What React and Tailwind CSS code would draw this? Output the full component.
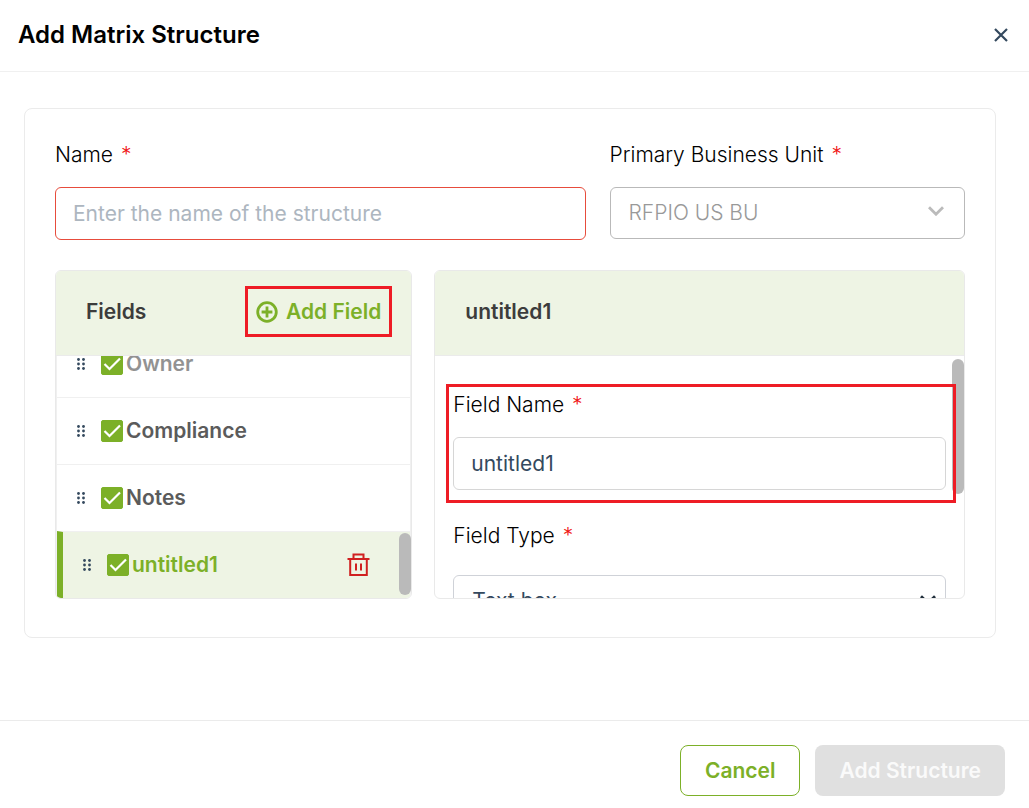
import { useState } from "react";

const FIELDS = [
    { id: "owner", name: "Owner", locked: true },
    { id: "compliance", name: "Compliance" },
    { id: "notes", name: "Notes" },
    { id: "untitled1", name: "untitled1" },
];

function Label({ htmlFor, children }) {
    return (
        <label htmlFor={htmlFor} className="block text-[21px] leading-6 font-light text-black">
            {children} <span className="ml-0.5 text-[#f01414]">*</span>
        </label>
    )
}

function Chevron({ className }) {
    return (
        <svg viewBox="0 0 16 10" className={className} fill="none" stroke="currentColor" strokeWidth="2.8" aria-hidden="true">
            <path d="M1 1.2L8 8.2L15 1.2" />
        </svg>
    )
}

function DragHandle() {
    return (
        <svg viewBox="0 0 8 12" width="8" height="12" className="shrink-0 text-[#34495e]" fill="currentColor" aria-hidden="true">
            <circle cx="1.5" cy="1.5" r="1.4" />
            <circle cx="6.5" cy="1.5" r="1.4" />
            <circle cx="1.5" cy="6" r="1.4" />
            <circle cx="6.5" cy="6" r="1.4" />
            <circle cx="1.5" cy="10.5" r="1.4" />
            <circle cx="6.5" cy="10.5" r="1.4" />
        </svg>
    )
}

function TrashIcon() {
    return (
        <svg viewBox="0 0 23 24" width="23" height="24" fill="none" stroke="currentColor" strokeWidth="2" aria-hidden="true">
            <path d="M0.5 6H22.5" />
            <path d="M6.5 6V1.5H16.5V6" />
            <path d="M3.2 6V22H19.8V6" />
            <path d="M9 10.5V17.5M14 10.5V17.5" />
        </svg>
    )
}

function FieldRow({ field, active, checked, onToggle, onSelect }) {
    let color = "text-[#5b5b5b]";
    if (active) color = "text-[#7cb028]";
    else if (field.locked) color = "text-[#929292]";

    return (
        <li
            onClick={onSelect}
            className={`flex h-[67px] shrink-0 items-center pl-5 pr-10 border-t border-t-[#f0f0f0] ${active ? "border-l-6 border-l-[#7cb028] bg-[#eef4e4]" : ""}`}
        >
            <DragHandle />
            <span className="relative ml-4 mr-[3px] size-[22px] shrink-0">
                <input
                    id={field.id}
                    type="checkbox"
                    checked={checked}
                    onChange={onToggle}
                    className="peer block size-[22px] appearance-none rounded-xs border border-[#7cb028] checked:bg-[#7cb028]"
                />
                <svg viewBox="0 0 22 22" className="pointer-events-none absolute inset-0 hidden text-white peer-checked:block" fill="none" stroke="currentColor" strokeWidth="2.2" aria-hidden="true">
                    <path d="M3.5 11L8.5 16L19 5.5" />
                </svg>
            </span>
            <label htmlFor={field.id} className={`text-[21px] leading-6 font-semibold ${color}`}>{field.name}</label>
            {active && (
                <button type="button" aria-label="Delete field" className="ml-auto text-[#d02020]">
                    <TrashIcon />
                </button>
            )}
        </li>
    )
}

export default function App() {
    const [name, setName] = useState("");
    const [activeId, setActiveId] = useState("untitled1");
    const [fieldName, setFieldName] = useState("untitled1");
    const [unchecked, setUnchecked] = useState([]);

    function toggle(id) {
        setUnchecked(unchecked.includes(id) ? unchecked.filter(x => x !== id) : [...unchecked, id]);
    }

    return (
        <div className="flex min-h-screen flex-col bg-white font-['Inter',sans-serif]">
            <header className="flex h-[72px] items-center justify-between border-b border-[#f0f0f0] pl-[18px] pr-5 pb-0.5">
                <h1 className="text-2xl font-semibold text-black">Add Matrix Structure</h1>
                <button type="button" aria-label="Close" className="text-[#34495e]">
                    <svg viewBox="0 0 16 16" width="16" height="16" fill="none" stroke="currentColor" strokeWidth="2.2" aria-hidden="true">
                        <path d="M2 2L14 14M14 2L2 14" />
                    </svg>
                </button>
            </header>

            <main className="pl-6 pr-[33px] pt-9 pb-9">
                <section className="rounded-lg border border-[#ebebeb] px-[30px] pt-[34px] pb-[38px]">
                    <div className="grid grid-cols-[100fr_67fr] gap-6">
                        <div>
                            <Label htmlFor="name">Name</Label>
                            <input
                                id="name"
                                type="text"
                                value={name}
                                onChange={e => setName(e.target.value)}
                                placeholder="Enter the name of the structure"
                                className="mt-5 block h-[53px] w-full rounded-md border border-[#e74c3c] px-[17px] text-[21px] text-[#34495e] placeholder:text-[#adb6bf]"
                            />
                        </div>
                        <div>
                            <Label htmlFor="unit">Primary Business Unit</Label>
                            <div className="relative mt-5">
                                <select id="unit" disabled className="block h-[52px] w-full appearance-none rounded-md border border-[#b9b9b9] bg-white px-[18px] text-[21px] font-light text-[#999999] opacity-100">
                                    <option>RFPIO US BU</option>
                                </select>
                                <Chevron className="pointer-events-none absolute right-[21px] top-[19px] w-4 text-[#bbbbbb]" />
                            </div>
                        </div>
                    </div>

                    <div className="mt-[30px] grid grid-cols-[68fr_101fr] gap-[22px]">
                        <div className="h-[329px] overflow-hidden rounded-md border border-[#e9e9e9]">
                            <div className="flex h-[85px] items-start justify-between border-b border-[#ebebeb] bg-[#eef4e4] pl-[30px] pr-[19px] pt-[15px]">
                                <h2 className="text-[21px] leading-[51px] font-semibold text-[#3c3c3c]">Fields</h2>
                                <button type="button" className="flex h-[51px] items-center gap-2 border-3 border-[#ee1c25] px-2 text-[21px] font-semibold text-[#7cb028]">
                                    <svg viewBox="0 0 22 22" width="22" height="22" fill="none" stroke="currentColor" strokeWidth="2.8" aria-hidden="true">
                                        <circle cx="11" cy="11" r="9.3" />
                                        <path d="M11 5.6V16.4M5.6 11H16.4" />
                                    </svg>
                                    Add Field
                                </button>
                            </div>
                            <div className="relative">
                                <ul className="flex h-[242px] flex-col justify-end overflow-hidden border-l border-r border-[#f0f0f0]">
                                    {FIELDS.map(field => (
                                        <FieldRow
                                            key={field.id}
                                            field={field}
                                            active={field.id === activeId}
                                            checked={!unchecked.includes(field.id)}
                                            onToggle={() => toggle(field.id)}
                                            onSelect={() => setActiveId(field.id)}
                                        />
                                    ))}
                                </ul>
                                <div className="absolute bottom-[3px] right-0 h-[62px] w-3 rounded-full bg-[#bababa]" />
                            </div>
                        </div>

                        <div className="h-[329px] overflow-hidden rounded-md border border-[#e9e9e9]">
                            <div className="flex h-[85px] items-start border-b border-[#ebebeb] bg-[#eef4e4] px-[30px] pt-[15px]">
                                <h2 className="text-[21px] leading-[51px] font-semibold text-[#3c3c3c]">{fieldName}</h2>
                            </div>
                            <div className="relative h-[242px] overflow-hidden px-[18px] pt-[37px]">
                                <div className="absolute right-0 top-[3px] h-[135px] w-3 rounded-full bg-[#bababa]" />
                                <div className="relative">
                                    <Label htmlFor="field-name">Field Name</Label>
                                    <input
                                        id="field-name"
                                        type="text"
                                        value={fieldName}
                                        onChange={e => setFieldName(e.target.value)}
                                        className="mt-5 block h-[53px] w-full rounded-md border border-[#d6d6d6] px-[17px] text-[21px] text-[#34495e]"
                                    />
                                    {/* highlight frame */}
                                    <div className="pointer-events-none absolute -left-[7px] -right-[10px] -top-[9px] -bottom-[13px] border-3 border-[#ee1c25]" />
                                </div>
                                <div className="mt-[34px]">
                                    <Label htmlFor="field-type">Field Type</Label>
                                    <div className="relative mt-[27px]">
                                        <select id="field-type" className="block h-[52px] w-full appearance-none rounded-md border border-[#cfd2d8] bg-white px-[18px] text-[21px] text-[#34495e]">
                                            <option>Text box</option>
                                        </select>
                                        <Chevron className="pointer-events-none absolute right-[10px] top-5 w-4 text-[#22303d]" />
                                    </div>
                                </div>
                            </div>
                        </div>
                    </div>
                </section>
            </main>

            <footer className="mt-auto flex justify-end gap-[15px] border-t border-[#ebebeb] pr-6 pt-6 pb-3">
                <button type="button" className="h-[51px] rounded-lg border border-[#7cb028] px-6 text-[21px] font-semibold text-[#7cb028]">Cancel</button>
                <button type="button" disabled className="h-[51px] rounded-lg bg-[#e0e0e0] px-6 text-[21px] font-semibold text-[#fafafa]">Add Structure</button>
            </footer>
        </div>
    )
}
